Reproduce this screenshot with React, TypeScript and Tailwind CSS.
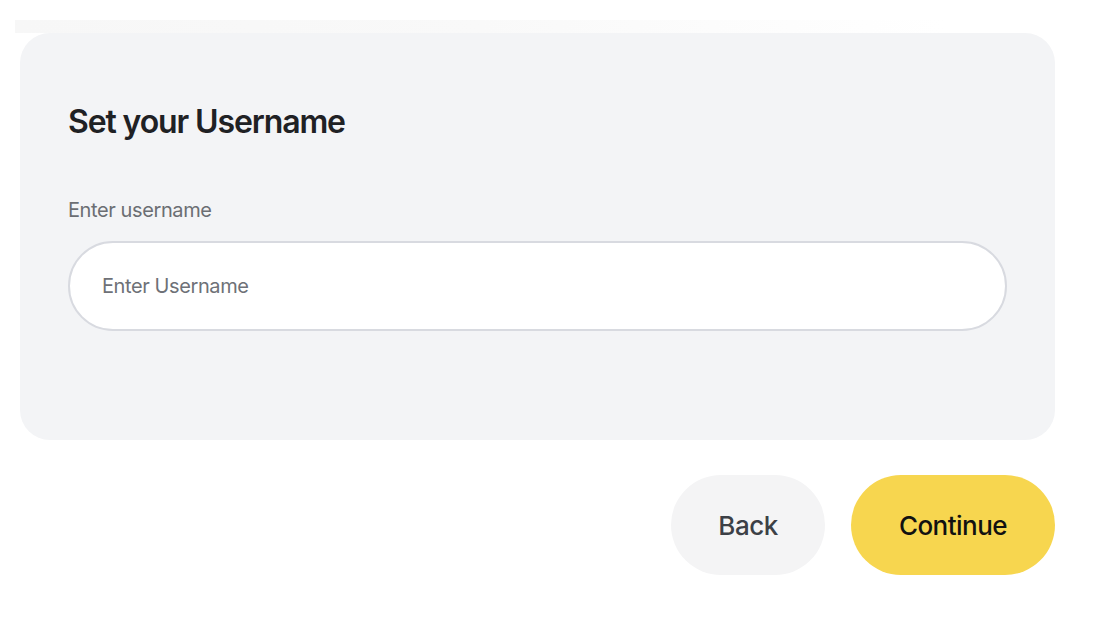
export default function App() {
  return (
    <div className="min-h-screen bg-white pt-5 font-['Inter',sans-serif]">
      <div className="ml-[15px] h-[13px] w-[930px] bg-gradient-to-r from-[#f7f7f7] via-[#f9f9f9] to-white" />
      <div className="ml-5 w-[1035px]">
        <section className="h-[407px] rounded-[30px] bg-[#f3f4f6] pl-12 pr-12 pt-[73px]">
          <h1 className="text-[32px] font-semibold leading-none tracking-[-0.035em] text-[#1f2124]">
            Set your Username
          </h1>
          <label className="mt-[62px] block text-[20px] leading-none tracking-[-0.02em] text-[#6b6e73]">
            Enter username
          </label>
          <input
            type="text"
            placeholder="Enter Username"
            className="mt-[21px] h-[90px] w-[939px] rounded-full border-2 border-[#d8dae0] bg-white px-8 text-[20px] tracking-[-0.02em] text-[#1f2124] outline-none placeholder:text-[#6e7177]"
          />
        </section>

        <div className="mt-[35px] flex justify-end gap-[26px]">
          <button className="h-[100px] w-[154px] rounded-full bg-[#f4f4f5] text-[26px] font-medium tracking-[-0.02em] text-[#3c4046]">
            Back
          </button>
          <button className="h-[100px] w-[204px] rounded-full bg-[#f7d64f] text-[26px] font-medium tracking-[-0.02em] text-[#111111]">
            Continue
          </button>
        </div>
      </div>
    </div>
  );
}
